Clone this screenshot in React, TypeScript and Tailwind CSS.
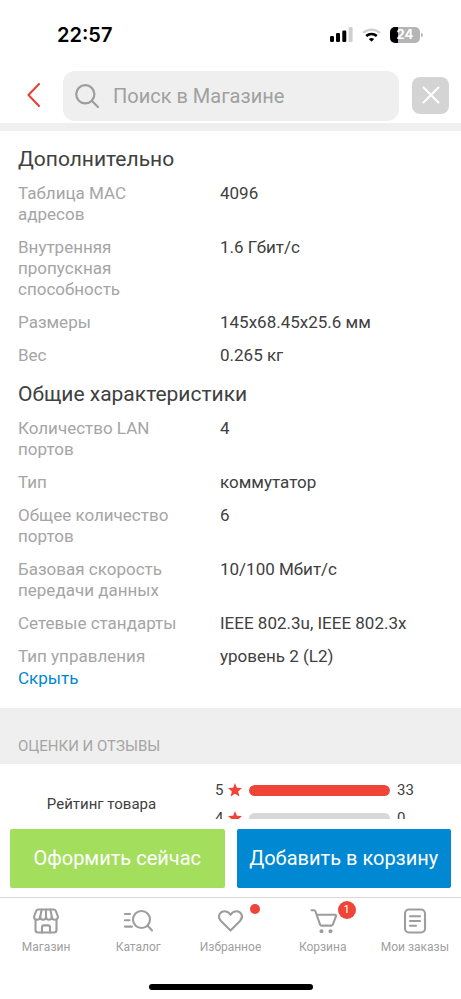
import { useState } from "react";
import type { ReactNode } from "react";

type Spec = { label: string; value: string };

const additional: Spec[] = [
  { label: "Таблица MAC адресов", value: "4096" },
  { label: "Внутренняя пропускная способность", value: "1.6 Гбит/с" },
  { label: "Размеры", value: "145x68.45x25.6 мм" },
  { label: "Вес", value: "0.265 кг" },
];

const general: Spec[] = [
  { label: "Количество LAN портов", value: "4" },
  { label: "Тип", value: "коммутатор" },
  { label: "Общее количество портов", value: "6" },
  { label: "Базовая скорость передачи данных", value: "10/100 Мбит/с" },
  { label: "Сетевые стандарты", value: "IEEE 802.3u, IEEE 802.3x" },
  { label: "Тип управления", value: "уровень 2 (L2)" },
];

const ratings = [
  { stars: 5, count: 33 },
  { stars: 4, count: 0 },
];

const totalRatings = ratings.reduce((sum, r) => sum + r.count, 0);

function StatusBar() {
  return (
    <div className="flex h-[69px] items-center justify-between pr-[38px] pl-[57px] text-black">
      <time className="font-['Inter'] text-xl font-semibold">22:57</time>
      <div className="flex items-center gap-[9px]">
        <svg width="23" height="15" viewBox="0 0 23 15">
          <rect x="0" y="9" width="4" height="6" rx="1.2" />
          <rect x="6" y="6" width="4" height="9" rx="1.2" />
          <rect x="12.3" y="3.5" width="4" height="11.5" rx="1.2" />
          <rect x="18.6" y="0" width="4" height="15" rx="1.2" fill="#cfcfcf" />
        </svg>
        <svg width="19" height="14" viewBox="0 0 19 14" fill="none">
          <path
            d="M1.2 4.8C5.9.5 13.1.5 17.8 4.8"
            stroke="#cfcfcf"
            strokeWidth="2.4"
          />
          <path
            d="M4.2 8.1c3.1-2.7 7.5-2.7 10.6 0"
            stroke="#000"
            strokeWidth="2.6"
          />
          <path d="M6.8 10.9c1.6-1.3 3.8-1.3 5.4 0L9.5 13.7z" fill="#000" />
        </svg>
        <div className="flex items-center gap-px">
          <div className="flex h-4 w-[30px] items-center justify-center rounded-[5px] bg-linear-to-r from-black from-25% to-[#b5b5b5] to-25% font-['Inter'] text-[13px] font-bold text-white">
            24
          </div>
          <div className="h-1 w-0.5 rounded-r-full bg-[#b5b5b5]" />
        </div>
      </div>
    </div>
  );
}

function SearchBar() {
  const [query, setQuery] = useState("");

  return (
    <div className="flex items-center pr-3 pb-0.5 pl-[27px]">
      <button type="button" aria-label="Назад" className="w-9">
        <svg width="13" height="24" viewBox="0 0 13 24" fill="none">
          <path
            d="M12 1 1.5 12 12 23"
            stroke="#e8402f"
            strokeWidth="2"
            strokeLinecap="round"
            strokeLinejoin="round"
          />
        </svg>
      </button>
      <label className="mt-0.5 flex h-[50px] min-w-0 flex-1 items-center gap-[14px] rounded-xl bg-[#efefef] pl-3">
        <svg
          width="24"
          height="24"
          viewBox="0 0 24 24"
          fill="none"
          stroke="#9d9d9d"
          strokeWidth="2.2"
          strokeLinecap="round"
        >
          <circle cx="10.3" cy="10.3" r="9.1" />
          <path d="m17 17 6 6" />
        </svg>
        <input
          type="text"
          aria-label="Поиск в Магазине"
          placeholder="Поиск в Магазине"
          value={query}
          onChange={(e) => setQuery(e.target.value)}
          className="min-w-0 flex-1 bg-transparent text-xl outline-none placeholder:text-[#a0a0a0]"
        />
      </label>
      <button
        type="button"
        aria-label="Закрыть"
        onClick={() => setQuery("")}
        className="ml-[13px] flex size-[37px] items-center justify-center rounded-lg bg-[#d4d4d4]"
      >
        <svg width="18" height="18" viewBox="0 0 18 18" fill="none">
          <path
            d="m1.5 1.5 15 15m0-15-15 15"
            stroke="#fff"
            strokeWidth="2"
            strokeLinecap="round"
          />
        </svg>
      </button>
    </div>
  );
}

function SpecGroup({ title, specs }: { title: string; specs: Spec[] }) {
  return (
    <section className="pb-1.5 last-of-type:pb-0">
      <h2 className="pt-2 pb-2.5 text-[21px] leading-7">{title}</h2>
      <dl className="flex flex-col gap-3 text-[17px] leading-[21px]">
        {specs.map((spec) => (
          <div key={spec.label} className="grid grid-cols-[160px_1fr] gap-x-[42px]">
            <dt className="text-[#a5a5a5]">{spec.label}</dt>
            <dd>{spec.value}</dd>
          </div>
        ))}
      </dl>
    </section>
  );
}

function RatingRow({ stars, count }: { stars: number; count: number }) {
  const share = totalRatings ? (count / totalRatings) * 100 : 0;

  return (
    <div className="flex h-5 items-center text-[15px]">
      <span className="w-[13px]">{stars}</span>
      <svg width="14" height="14" viewBox="0 0 14 14" fill="#ef4437">
        <path d="m7 0 1.9 4.7 5.1.4-3.8 3.3 1.200 5.100L7 10.800l-4.400 2.700 1.200-5.100L0 5.100l5.100-.4z" />
      </svg>
      <div className="mx-[7px] h-[11px] flex-1 overflow-hidden rounded-full bg-[#d8d8d8]">
        <div
          className="h-full rounded-full bg-[#ef4437]"
          style={{ width: `${share}%` }}
        />
      </div>
      <span className="w-16">{count}</span>
    </div>
  );
}

function NavIcon({ children }: { children: ReactNode }) {
  return (
    <svg
      width="30"
      height="26"
      viewBox="0 0 30 26"
      fill="none"
      stroke="#9d9d9d"
      strokeWidth="2.1"
      strokeLinecap="round"
      strokeLinejoin="round"
    >
      {children}
    </svg>
  );
}

const tabs = [
  {
    label: "Магазин",
    icon: (
      <NavIcon>
        <path d="M7.5 1.5h15c1.200 0 2 .6 2.400 1.700l2 5.300c.3 1.900-.9 3.200-2.900 3.200-1.900 0-3.200-1.200-3.200-2.900 0 1.700-1.300 2.900-2.900 2.900S15 10.500 15 8.800c0 1.700-1.300 2.900-2.900 2.900S9.200 10.500 9.200 8.800c0 1.700-1.300 2.900-3.200 2.900-2 0-3.200-1.300-2.900-3.200l2-5.300c.4-1.100 1.200-1.700 2.400-1.700z" />
        <path d="m10.700 1.500-1.500 7.300M15 1.500v7.300M19.300 1.500l1.500 7.300" />
        <path d="M4.500 12v10c0 1.600.9 2.500 2.500 2.500h16c1.600 0 2.500-.9 2.500-2.500V12" />
        <path d="M11 24.500v-5.200c0-1.200.7-1.900 1.900-1.900h4.200c1.200 0 1.900.7 1.900 1.900v5.200" />
      </NavIcon>
    ),
  },
  {
    label: "Каталог",
    icon: (
      <NavIcon>
        <circle cx="18.500" cy="11.500" r="8.500" />
        <path d="m24.700 17.700 4.300 4.800M2 6h5M2 12.300h4.500M2 18.600h7" />
      </NavIcon>
    ),
  },
  {
    label: "Избранное",
    badge: (
      <span className="absolute -top-1 -right-[15px] size-[10px] rounded-full bg-[#ef4437]" />
    ),
    icon: (
      <NavIcon>
        <path d="M15.500 22.500 6 13C1.800 8.500 5 3.200 9.400 3.200c2.600 0 4.600 1.300 6.100 3.600 1.500-2.300 3.500-3.600 6.100-3.600 4.400 0 7.600 5.300 3.400 9.800z" />
      </NavIcon>
    ),
  },
  {
    label: "Корзина",
    badge: (
      <span className="absolute -top-[7px] -right-[18px] flex size-[18px] items-center justify-center rounded-full bg-[#ef4437] text-[11px] text-white">
        1
      </span>
    ),
    icon: (
      <NavIcon>
        <path d="M3.500 2.300H6c.8 0 1.200.4 1.500 1.200L12 16.400c.3.800.8 1.200 1.600 1.200h9.600c.9 0 1.500-.5 1.800-1.400l3-8c.3-.8-.1-1.400-1-1.400H8.700" />
        <circle cx="13.500" cy="23.200" r="1" fill="#9d9d9d" />
        <circle cx="22.500" cy="23.200" r="1" fill="#9d9d9d" />
      </NavIcon>
    ),
  },
  {
    label: "Мои заказы",
    icon: (
      <NavIcon>
        <rect x="5" y="1.500" width="20" height="23" rx="4" />
        <path d="M10 8.300h10M10 13h10M10 17.700h6" />
      </NavIcon>
    ),
  },
];

function TabBar() {
  return (
    <nav className="grid grid-cols-5 border-t border-[#d8d8d8] pt-[10px]">
      {tabs.map((tab) => (
        <a
          key={tab.label}
          href="#"
          className="flex flex-col items-center gap-1 text-[12px] leading-[18px] whitespace-nowrap text-[#a0a0a0]"
        >
          <span className="relative">
            {tab.icon}
            {tab.badge}
          </span>
          {tab.label}
        </a>
      ))}
    </nav>
  );
}

export default function App() {
  const [expanded, setExpanded] = useState(true);

  return (
    <div className="flex h-screen flex-col bg-white font-['Roboto',sans-serif] text-[#404040]">
      <header className="border-b-8 border-[#efefef]">
        <StatusBar />
        <SearchBar />
      </header>

      <main className="min-h-0 flex-1 overflow-y-auto [scrollbar-width:none]">
        <div className="px-[18px] pt-1.5 pb-[18px]">
          <SpecGroup title="Дополнительно" specs={additional} />
          {expanded && <SpecGroup title="Общие характеристики" specs={general} />}
          <button
            type="button"
            onClick={() => setExpanded(!expanded)}
            className="block text-[17px] leading-[23px] text-[#0088cf]"
          >
            {expanded ? "Скрыть" : "Показать все"}
          </button>
        </div>

        <h2 className="bg-[#efefef] px-[18px] pt-7 pb-2 text-[15px] leading-5 text-[#a5a5a5]">
          ОЦЕНКИ И ОТЗЫВЫ
        </h2>

        <section className="grid grid-cols-[203px_1fr] pt-4">
          <p className="pt-3 text-center text-[15px] leading-6">Рейтинг товара</p>
          <div className="flex flex-col gap-2 pl-3">
            {ratings.map((r) => (
              <RatingRow key={r.stars} stars={r.stars} count={r.count} />
            ))}
          </div>
        </section>
      </main>

      <footer>
        <div className="grid grid-cols-2 gap-3 px-[10px] pt-[10px] pb-[9px] text-xl whitespace-nowrap text-white">
          <button type="button" className="h-[59px] rounded-xs bg-[#a4de5d] pb-0.5">
            Оформить сейчас
          </button>
          <button type="button" className="h-[59px] rounded-xs bg-[#0088d2] pb-0.5">
            Добавить в корзину
          </button>
        </div>
        <TabBar />
        <div className="mx-auto mt-7 mb-[9px] h-1.5 w-[164px] rounded-full bg-black" />
      </footer>
    </div>
  );
}
